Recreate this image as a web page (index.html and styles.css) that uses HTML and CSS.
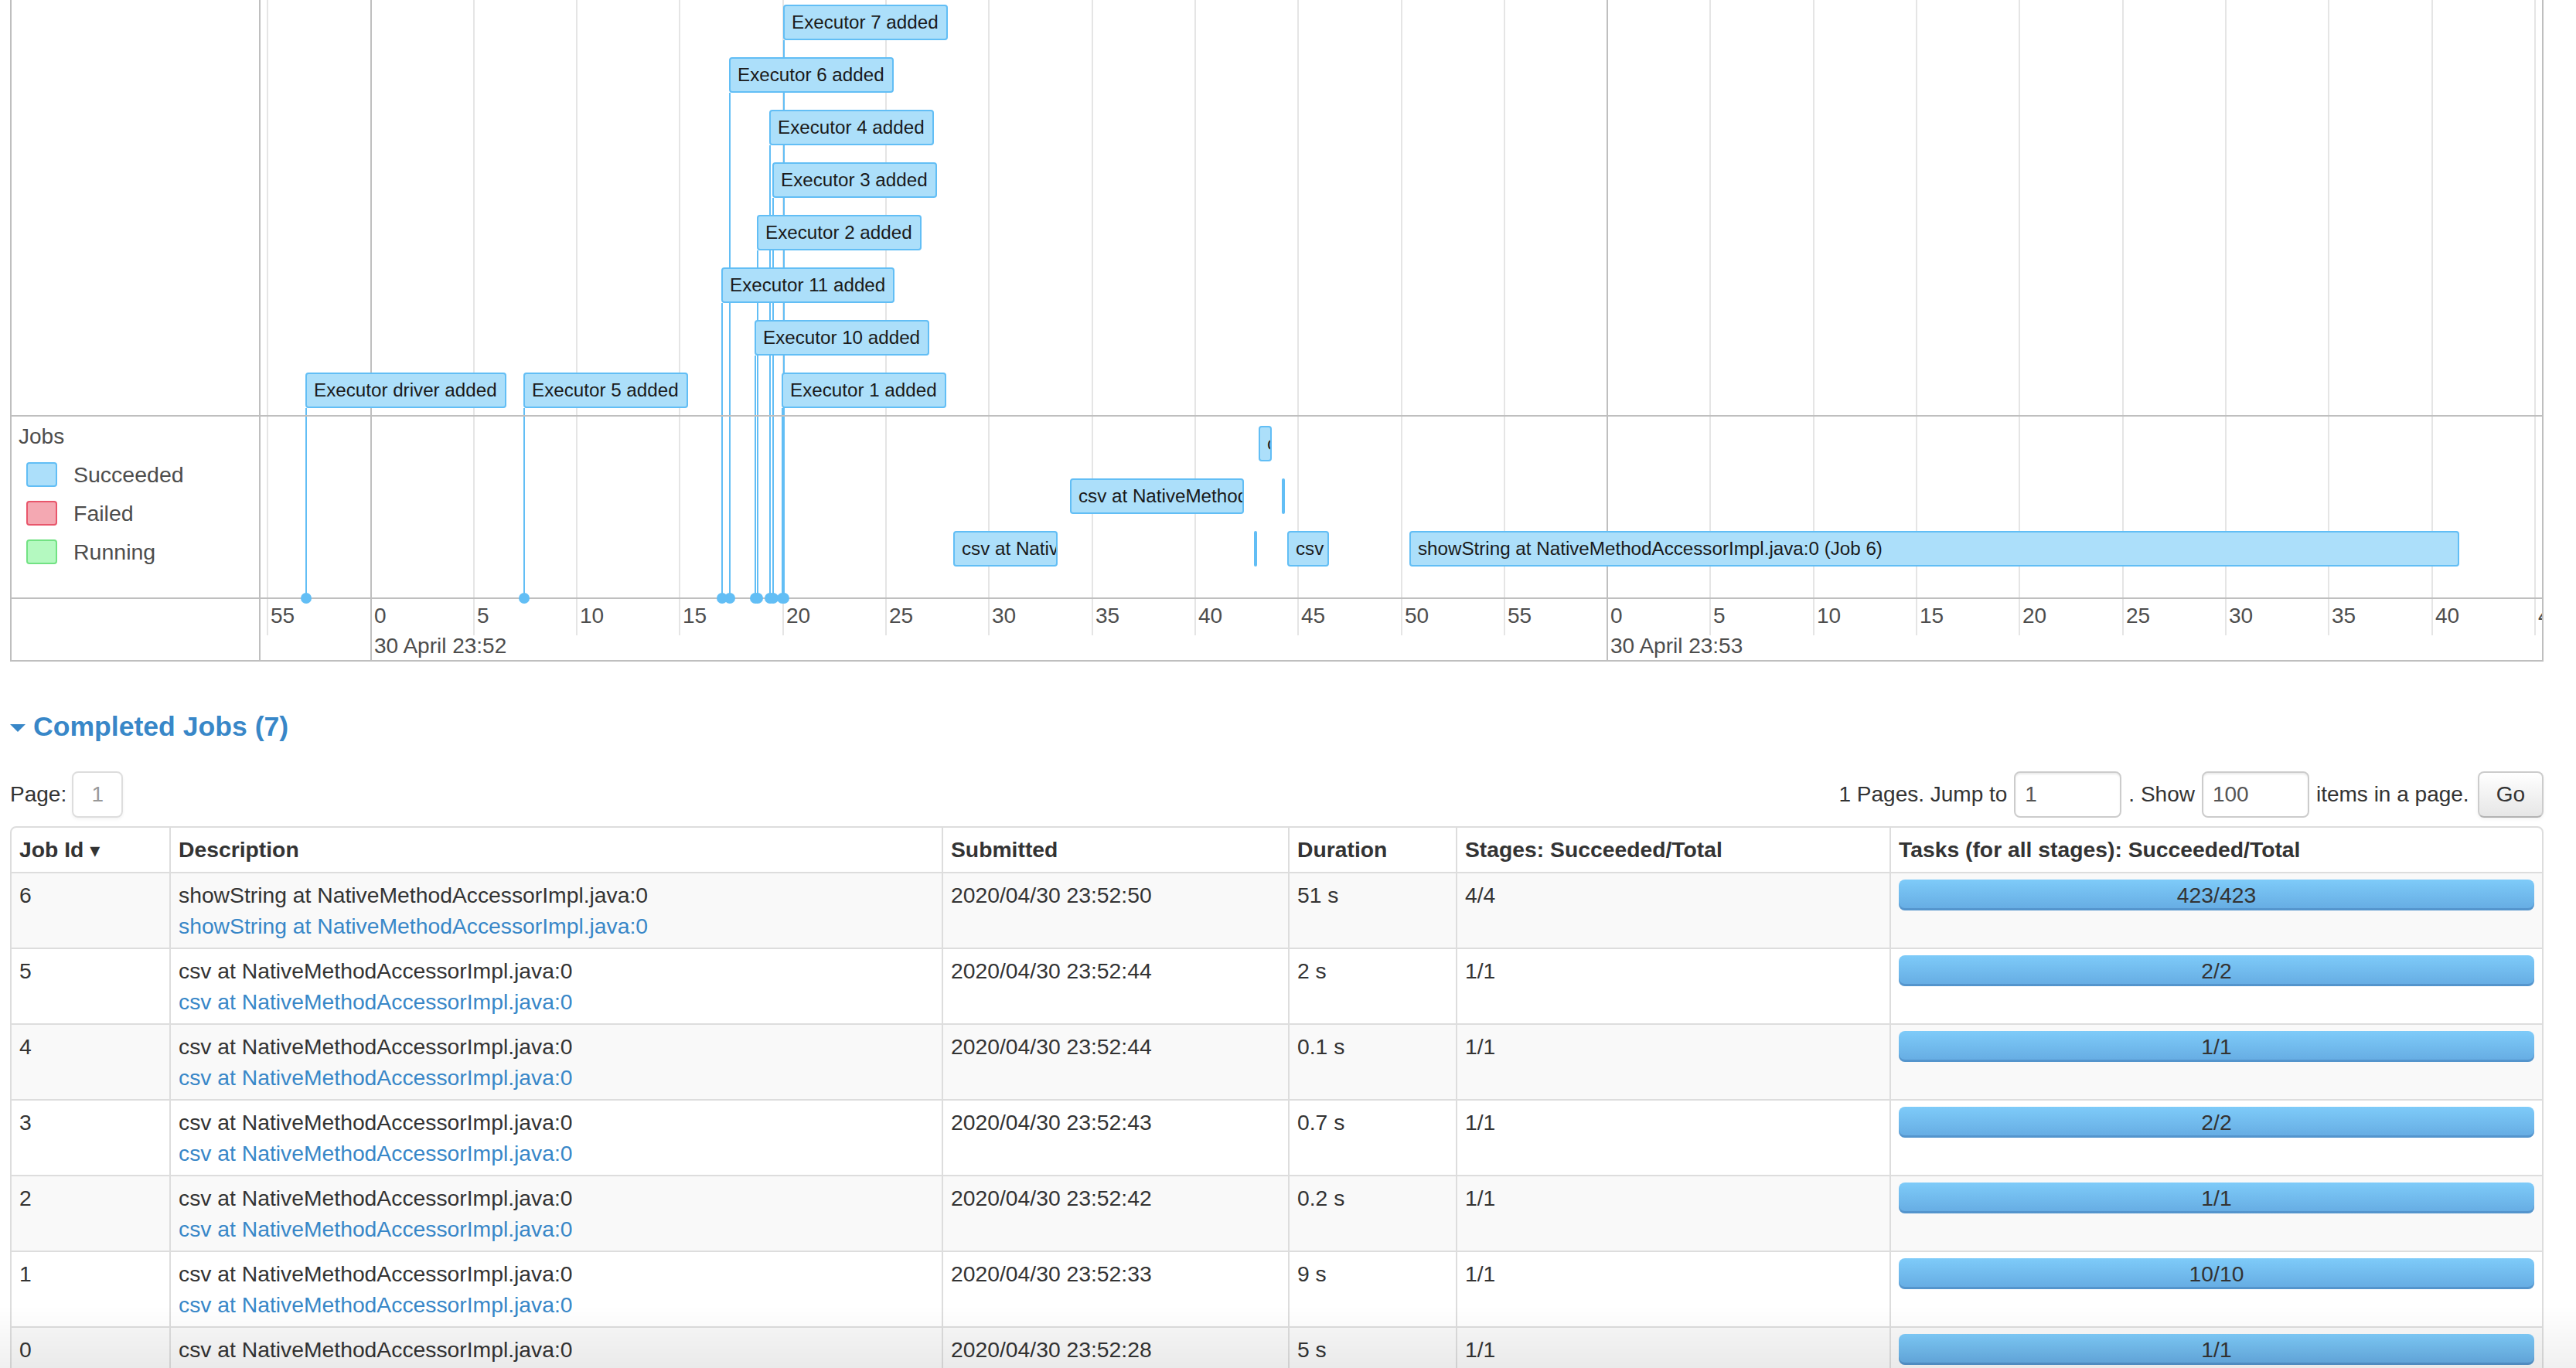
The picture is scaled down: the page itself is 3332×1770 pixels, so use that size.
FILE: index.html
```html
<!DOCTYPE html>
<html>
<head>
<meta charset="utf-8">
<title>Spark Jobs</title>
<link rel="stylesheet" href="styles.css">
</head>
<body>
<div class="page">
  <div class="timeline">
    <div class="tl-left">
      <div class="sec-exec"></div>
      <div class="sec-jobs">
        <div class="group-label">Jobs</div>
        <div class="legend">
          <div class="legend-row"><span class="swatch succeeded"></span><span class="legend-text">Succeeded</span></div>
          <div class="legend-row"><span class="swatch failed"></span><span class="legend-text">Failed</span></div>
          <div class="legend-row"><span class="swatch running"></span><span class="legend-text">Running</span></div>
        </div>
      </div>
      <div class="sec-axis"></div>
    </div>
    <div class="tl-center">
      <div class="grid">
        <div class="gl" style="left:8px"></div>
        <div class="gl major" style="left:142px"></div>
        <div class="gl" style="left:275px"></div>
        <div class="gl" style="left:408px"></div>
        <div class="gl" style="left:541px"></div>
        <div class="gl" style="left:675px"></div>
        <div class="gl" style="left:808px"></div>
        <div class="gl" style="left:941px"></div>
        <div class="gl" style="left:1075px"></div>
        <div class="gl" style="left:1208px"></div>
        <div class="gl" style="left:1341px"></div>
        <div class="gl" style="left:1475px"></div>
        <div class="gl" style="left:1608px"></div>
        <div class="gl major" style="left:1741px"></div>
        <div class="gl" style="left:1874px"></div>
        <div class="gl" style="left:2008px"></div>
        <div class="gl" style="left:2141px"></div>
        <div class="gl" style="left:2274px"></div>
        <div class="gl" style="left:2408px"></div>
        <div class="gl" style="left:2541px"></div>
        <div class="gl" style="left:2674px"></div>
        <div class="gl" style="left:2808px"></div>
        <div class="gl" style="left:2941px"></div>
      </div>

      <div class="lines">
        <div class="exec-line" style="left:676px;top:52px;height:722px"></div>
        <div class="exec-line" style="left:606px;top:120px;height:654px"></div>
        <div class="exec-line" style="left:658px;top:188px;height:586px"></div>
        <div class="exec-line" style="left:662px;top:256px;height:518px"></div>
        <div class="exec-line" style="left:642px;top:324px;height:450px"></div>
        <div class="exec-line" style="left:596px;top:392px;height:382px"></div>
        <div class="exec-line" style="left:639px;top:460px;height:314px"></div>
        <div class="exec-line" style="left:674px;top:528px;height:246px"></div>
        <div class="exec-line" style="left:58px;top:528px;height:246px"></div>
        <div class="exec-line" style="left:340px;top:528px;height:246px"></div>
      </div>

      <div class="grp-exec">
        <div class="item" style="left:676px;top:6px"><span class="content">Executor 7 added</span></div>
        <div class="item" style="left:606px;top:74px"><span class="content">Executor 6 added</span></div>
        <div class="item" style="left:658px;top:142px"><span class="content">Executor 4 added</span></div>
        <div class="item" style="left:662px;top:210px"><span class="content">Executor 3 added</span></div>
        <div class="item" style="left:642px;top:278px"><span class="content">Executor 2 added</span></div>
        <div class="item" style="left:596px;top:346px"><span class="content">Executor 11 added</span></div>
        <div class="item" style="left:639px;top:414px"><span class="content">Executor 10 added</span></div>
        <div class="item" style="left:674px;top:482px"><span class="content">Executor 1 added</span></div>
        <div class="item" style="left:58px;top:482px"><span class="content">Executor driver added</span></div>
        <div class="item" style="left:340px;top:482px"><span class="content">Executor 5 added</span></div>
      </div>

      <div class="grp-jobs">
        <div class="item range" style="left:1291px;top:12px;width:17px"><span class="content">csv at NativeMethodAccessorImpl.java:0 (Job 3)</span></div>
        <div class="item range" style="left:1047px;top:80px;width:225px"><span class="content">csv at NativeMethodAccessorImpl.java:0 (Job 1)</span></div>
        <div class="item range" style="left:1321px;top:80px;width:4px"></div>
        <div class="item range" style="left:896px;top:148px;width:135px"><span class="content">csv at NativeMethodAccessorImpl.java:0 (Job 0)</span></div>
        <div class="item range" style="left:1285px;top:148px;width:4px"></div>
        <div class="item range" style="left:1328px;top:148px;width:54px"><span class="content">csv at NativeMethodAccessorImpl.java:0 (Job 5)</span></div>
        <div class="item range" style="left:1486px;top:148px;width:1358px"><span class="content">showString at NativeMethodAccessorImpl.java:0 (Job 6)</span></div>
      </div>

      <div class="axis">
        <span class="minor-label" style="left:13px">55</span>
        <span class="minor-label" style="left:147px">0</span>
        <span class="minor-label" style="left:280px">5</span>
        <span class="minor-label" style="left:413px">10</span>
        <span class="minor-label" style="left:546px">15</span>
        <span class="minor-label" style="left:680px">20</span>
        <span class="minor-label" style="left:813px">25</span>
        <span class="minor-label" style="left:946px">30</span>
        <span class="minor-label" style="left:1080px">35</span>
        <span class="minor-label" style="left:1213px">40</span>
        <span class="minor-label" style="left:1346px">45</span>
        <span class="minor-label" style="left:1480px">50</span>
        <span class="minor-label" style="left:1613px">55</span>
        <span class="minor-label" style="left:1746px">0</span>
        <span class="minor-label" style="left:1879px">5</span>
        <span class="minor-label" style="left:2013px">10</span>
        <span class="minor-label" style="left:2146px">15</span>
        <span class="minor-label" style="left:2279px">20</span>
        <span class="minor-label" style="left:2413px">25</span>
        <span class="minor-label" style="left:2546px">30</span>
        <span class="minor-label" style="left:2679px">35</span>
        <span class="minor-label" style="left:2813px">40</span>
        <span class="minor-label" style="left:2946px">45</span>
        <span class="major-label" style="left:147px">30 April 23:52</span>
        <span class="major-label" style="left:1746px">30 April 23:53</span>
      </div>

      <div class="dots">
        <div class="dot" style="left:670px"></div>
        <div class="dot" style="left:600px"></div>
        <div class="dot" style="left:652px"></div>
        <div class="dot" style="left:656px"></div>
        <div class="dot" style="left:636px"></div>
        <div class="dot" style="left:590px"></div>
        <div class="dot" style="left:633px"></div>
        <div class="dot" style="left:668px"></div>
        <div class="dot" style="left:52px"></div>
        <div class="dot" style="left:334px"></div>
      </div>
    </div>
  </div>

  <h4 class="section-title"><span class="arrow-open"></span><a class="title-link">Completed Jobs (7)</a></h4>

  <div class="paging">
    <div class="paging-left">
      <span>Page:</span>
      <span class="page-box">1</span>
    </div>
    <form class="paging-right">
      <label>1 Pages. Jump to</label>
      <input class="num-input" type="text" value="1">
      <label>. Show</label>
      <input class="num-input" type="text" value="100">
      <label>items in a page.</label>
      <button class="btn" type="button">Go</button>
    </form>
  </div>

  <table class="jobs-table">
    <colgroup>
      <col class="c-id"><col class="c-desc"><col class="c-sub"><col class="c-dur"><col class="c-stage"><col class="c-task">
    </colgroup>
    <thead>
      <tr>
        <th>Job Id <span class="sort-arrow">&#x25BE;</span></th>
        <th>Description</th>
        <th>Submitted</th>
        <th>Duration</th>
        <th>Stages: Succeeded/Total</th>
        <th>Tasks (for all stages): Succeeded/Total</th>
      </tr>
    </thead>
    <tbody>
      <tr class="odd">
        <td>6</td>
        <td><div>showString at NativeMethodAccessorImpl.java:0</div><a class="name-link">showString at NativeMethodAccessorImpl.java:0</a></td>
        <td>2020/04/30 23:52:50</td>
        <td>51 s</td>
        <td>4/4</td>
        <td><div class="progress"><span class="progress-text">423/423</span></div></td>
      </tr>
      <tr>
        <td>5</td>
        <td><div>csv at NativeMethodAccessorImpl.java:0</div><a class="name-link">csv at NativeMethodAccessorImpl.java:0</a></td>
        <td>2020/04/30 23:52:44</td>
        <td>2 s</td>
        <td>1/1</td>
        <td><div class="progress"><span class="progress-text">2/2</span></div></td>
      </tr>
      <tr class="odd">
        <td>4</td>
        <td><div>csv at NativeMethodAccessorImpl.java:0</div><a class="name-link">csv at NativeMethodAccessorImpl.java:0</a></td>
        <td>2020/04/30 23:52:44</td>
        <td>0.1 s</td>
        <td>1/1</td>
        <td><div class="progress"><span class="progress-text">1/1</span></div></td>
      </tr>
      <tr>
        <td>3</td>
        <td><div>csv at NativeMethodAccessorImpl.java:0</div><a class="name-link">csv at NativeMethodAccessorImpl.java:0</a></td>
        <td>2020/04/30 23:52:43</td>
        <td>0.7 s</td>
        <td>1/1</td>
        <td><div class="progress"><span class="progress-text">2/2</span></div></td>
      </tr>
      <tr class="odd">
        <td>2</td>
        <td><div>csv at NativeMethodAccessorImpl.java:0</div><a class="name-link">csv at NativeMethodAccessorImpl.java:0</a></td>
        <td>2020/04/30 23:52:42</td>
        <td>0.2 s</td>
        <td>1/1</td>
        <td><div class="progress"><span class="progress-text">1/1</span></div></td>
      </tr>
      <tr>
        <td>1</td>
        <td><div>csv at NativeMethodAccessorImpl.java:0</div><a class="name-link">csv at NativeMethodAccessorImpl.java:0</a></td>
        <td>2020/04/30 23:52:33</td>
        <td>9 s</td>
        <td>1/1</td>
        <td><div class="progress"><span class="progress-text">10/10</span></div></td>
      </tr>
      <tr class="odd">
        <td>0</td>
        <td><div>csv at NativeMethodAccessorImpl.java:0</div><a class="name-link">csv at NativeMethodAccessorImpl.java:0</a></td>
        <td>2020/04/30 23:52:28</td>
        <td>5 s</td>
        <td>1/1</td>
        <td><div class="progress"><span class="progress-text">1/1</span></div></td>
      </tr>
    </tbody>
  </table>
</div>
<div class="bottom-shade"></div>
</body>
</html>
```

FILE: styles.css
```css
html, body {
  margin: 0;
  padding: 0;
  overflow: hidden;
  background: #ffffff;
}

body {
  font-family: "Liberation Sans", Helvetica, Arial, sans-serif;
  font-size: 28px;
  line-height: 40px;
  color: #333333;
}

.page {
  padding-left: 13px;
  width: 3277px;
}

/* ---------- timeline ---------- */
.timeline {
  display: flex;
  height: 856px;
  box-sizing: border-box;
  border: 2px solid #bfbfbf;
  border-top: 0;
}

.tl-left {
  width: 322px;
  flex: none;
  box-sizing: border-box;
  border-right: 2px solid #bfbfbf;
  display: flex;
  flex-direction: column;
}

.sec-exec,
.grp-exec {
  height: 537px;
  flex: none;
}

.sec-jobs,
.grp-jobs {
  height: 234px;
  flex: none;
  border-top: 2px solid #bfbfbf;
}

.sec-axis,
.axis {
  height: 79px;
  flex: none;
  border-top: 2px solid #bfbfbf;
}

.sec-jobs {
  padding: 9px 0 0 9px;
  box-sizing: content-box;
  height: 225px;
}

.group-label {
  font-size: 28px;
  line-height: 34px;
  color: #4d4d4d;
}

.legend {
  margin: 16px 0 0 10px;
}

.legend-row {
  display: flex;
  align-items: center;
  height: 32px;
  margin-bottom: 18px;
}

.swatch {
  width: 40px;
  height: 32px;
  box-sizing: border-box;
  border: 2px solid;
  border-radius: 4px;
  margin-right: 21px;
  flex: none;
}

.swatch.succeeded {
  background: #acdffa;
  border-color: #62bef5;
}

.swatch.failed {
  background: #f4a8b2;
  border-color: #e8566b;
}

.swatch.running {
  background: #b4f9c0;
  border-color: #72e283;
}

.legend-text {
  font-size: 28.5px;
  line-height: 32px;
  color: #4d4d4d;
}

.tl-center {
  flex: 1;
  position: relative;
  overflow: hidden;
  display: flex;
  flex-direction: column;
}

.grid {
  position: absolute;
  top: 0;
  left: 0;
  right: 0;
  bottom: 0;
  z-index: 0;
}

.gl {
  position: absolute;
  top: 0;
  width: 2px;
  height: 822px;
  background: #e5e5e5;
}

.gl.major {
  height: 854px;
  background: #bfbfbf;
}

.lines,
.dots {
  position: absolute;
  top: 0;
  left: 0;
  right: 0;
  bottom: 0;
}

.lines {
  z-index: 1;
}

.dots {
  z-index: 4;
}

.exec-line {
  position: absolute;
  width: 2px;
  background: #62bef5;
}

.dot {
  position: absolute;
  top: 767px;
  width: 14px;
  height: 14px;
  border-radius: 50%;
  background: #62bef5;
}

.grp-exec,
.grp-jobs {
  position: relative;
  z-index: 2;
}

.item {
  position: absolute;
  height: 46px;
  box-sizing: border-box;
  border: 2px solid #62bef5;
  border-radius: 4px;
  background: #acdffa;
  color: #1a1a1a;
  font-size: 24.2px;
  line-height: 42px;
  white-space: nowrap;
  overflow: hidden;
}

.item .content {
  display: inline-block;
  padding: 0 10px 0 9px;
}

.axis {
  position: relative;
  z-index: 1;
}

.minor-label,
.major-label {
  position: absolute;
  font-size: 28px;
  line-height: 34px;
  color: #4d4d4d;
  white-space: nowrap;
}

.minor-label {
  top: 5px;
}

.major-label {
  top: 44px;
}

/* ---------- section header ---------- */
.section-title {
  margin: 64px 0 0 0;
  height: 40px;
  display: flex;
  align-items: center;
  font-size: 35.6px;
  line-height: 40px;
  font-weight: bold;
}

.arrow-open {
  width: 0;
  height: 0;
  border-left: 10px solid transparent;
  border-right: 10px solid transparent;
  border-top: 10px solid #3887c8;
  margin: 4px 10px 0 0;
}

.title-link {
  color: #3887c8;
  text-decoration: none;
}

/* ---------- paging ---------- */
.paging {
  margin-top: 38px;
  height: 60px;
  display: flex;
  justify-content: space-between;
  align-items: center;
}

.paging-left {
  display: flex;
  align-items: center;
  gap: 7px;
}

.page-box {
  width: 66px;
  height: 60px;
  box-sizing: border-box;
  border: 2px solid #dddddd;
  border-radius: 8px;
  color: #999999;
  text-align: center;
  line-height: 56px;
  box-shadow: 0 2px 4px rgba(0, 0, 0, 0.05);
}

.paging-right {
  display: flex;
  align-items: center;
  gap: 9px;
  margin: 0;
}

.num-input {
  width: 139px;
  height: 60px;
  box-sizing: border-box;
  border: 2px solid #cccccc;
  border-radius: 8px;
  padding: 0 12px;
  font-family: "Liberation Sans", Helvetica, Arial, sans-serif;
  font-size: 28px;
  color: #555555;
  box-shadow: inset 0 2px 2px rgba(0, 0, 0, 0.075);
  margin: 0;
}

.btn {
  height: 60px;
  box-sizing: border-box;
  padding: 0 22px;
  margin-left: 2px;
  border: 2px solid #cccccc;
  border-bottom-color: #b3b3b3;
  border-radius: 8px;
  background: linear-gradient(to bottom, #ffffff, #e6e6e6);
  font-family: "Liberation Sans", Helvetica, Arial, sans-serif;
  font-size: 28px;
  color: #333333;
  box-shadow: inset 0 2px 0 rgba(255, 255, 255, 0.2), 0 2px 4px rgba(0, 0, 0, 0.05);
}

/* ---------- table ---------- */
.jobs-table {
  margin-top: 11px;
  width: 3277px;
  table-layout: fixed;
  border-collapse: separate;
  border-spacing: 0;
  border: 2px solid #dddddd;
  border-radius: 8px;
  font-size: 28.3px;
  line-height: 40px;
  color: #333333;
}

.c-id { width: 204px; }
.c-desc { width: 999px; }
.c-sub { width: 448px; }
.c-dur { width: 217px; }
.c-stage { width: 561px; }
.c-task { width: 844px; }

.jobs-table th,
.jobs-table td {
  padding: 8px 10px;
  text-align: left;
  vertical-align: top;
  border-left: 2px solid #dddddd;
  border-top: 2px solid #dddddd;
  white-space: nowrap;
  overflow: hidden;
}

.jobs-table th:first-child,
.jobs-table td:first-child {
  border-left: 0;
}

.jobs-table thead th {
  border-top: 0;
  font-weight: bold;
}

.sort-arrow {
  font-family: "DejaVu Sans", sans-serif;
  font-size: 26px;
}

.jobs-table tr.odd td {
  background: #f9f9f9;
}

.name-link {
  display: block;
  color: #3887c8;
  text-decoration: none;
}

.progress {
  position: relative;
  height: 40px;
  border-radius: 8px;
  background: linear-gradient(to bottom, #7ecbf9, #65abe2);
  box-shadow: inset 0 -3px 0 rgba(30, 80, 140, 0.25);
  text-align: center;
}

.progress-text {
  line-height: 40px;
  color: #333333;
}

.bottom-shade {
  position: fixed;
  left: 0;
  right: 0;
  bottom: 0;
  height: 80px;
  background: linear-gradient(to bottom, rgba(0, 0, 0, 0), rgba(0, 0, 0, 0.06));
  pointer-events: none;
}
```
